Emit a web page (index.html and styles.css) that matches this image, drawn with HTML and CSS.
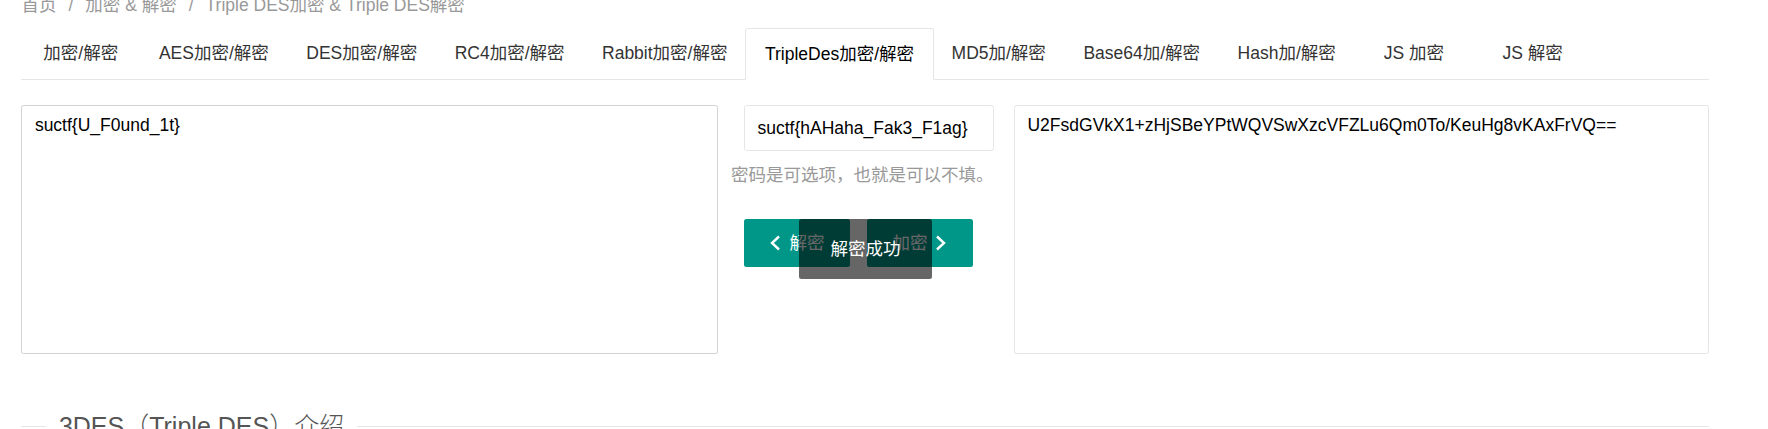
FILE: index.html
```html
<!DOCTYPE html>
<html lang="zh-CN">
<head>
<meta charset="utf-8">
<title>Triple DES加密 &amp; Triple DES解密</title>
<link rel="stylesheet" href="styles.css">
</head>
<body>
<div class="page">
  <nav class="crumbs">
    <a href="#">首页</a><span class="sep">/</span><a href="#">加密 &amp; 解密</a><span class="sep">/</span><a href="#" class="cur">Triple DES加密 &amp; Triple DES解密</a>
  </nav>

  <ul class="tabs">
    <li>加密/解密</li>
    <li>AES加密/解密</li>
    <li>DES加密/解密</li>
    <li>RC4加密/解密</li>
    <li>Rabbit加密/解密</li>
    <li class="active">TripleDes加密/解密</li>
    <li>MD5加/解密</li>
    <li>Base64加/解密</li>
    <li>Hash加/解密</li>
    <li>JS 加密</li>
    <li>JS 解密</li>
  </ul>

  <div class="work">
    <textarea class="box box-in">suctf{U_F0und_1t}</textarea>
    <div class="mid">
      <input class="pwd" type="text" value="suctf{hAHaha_Fak3_F1ag}">
      <div class="hint">密码是可选项，也就是可以不填。</div>
      <div class="btns">
        <button class="btn" type="button"><svg class="chev" viewBox="0 0 12 16" width="12" height="16"><polyline points="10,1.5 3,8 10,14.5"/></svg><span>解密</span></button>
        <button class="btn" type="button"><span>加密</span><svg class="chev" viewBox="0 0 12 16" width="12" height="16"><polyline points="2,1.5 9,8 2,14.5"/></svg></button>
      </div>
    </div>
    <textarea class="box box-out">U2FsdGVkX1+zHjSBeYPtWQVSwXzcVFZLu6Qm0To/KeuHg8vKAxFrVQ==</textarea>
  </div>

  <fieldset class="intro">
    <legend>3DES（Triple DES）介绍</legend>
  </fieldset>
</div>

<div class="toast">解密成功</div>
</body>
</html>
```

FILE: styles.css
```css
html, body {
  margin: 0;
  padding: 0;
  background: #fff;
}

body {
  font-family: "Liberation Sans", "Noto Sans CJK SC", sans-serif;
  font-size: 17.5px;
  color: #333;
  overflow: hidden;
}

.page {
  padding: 0 59px 0 21.4px;
}

/* breadcrumb */
.crumbs {
  margin-top: -6.6px;
  height: 25px;
  line-height: 25px;
  color: #999;
  white-space: nowrap;
}

.crumbs a {
  color: #999;
  text-decoration: none;
}

.crumbs .sep {
  margin: 0 12px;
  color: #999;
}

/* tabs */
.tabs {
  list-style: none;
  margin: 9.6px 0 0;
  padding: 0;
  display: flex;
  height: 51px;
  border-bottom: 1px solid #e6e6e6;
}

.tabs li {
  position: relative;
  min-width: 81.25px;
  padding: 0 18.75px;
  line-height: 51px;
  text-align: center;
  white-space: nowrap;
  color: #333;
}

.tabs li.active {
  color: #000;
  border: 1px solid #e6e6e6;
  border-bottom: 1px solid #fff;
  border-radius: 2.5px 2.5px 0 0;
  margin: 0 -1px -1px;
  line-height: 50px;
  background: #fff;
}

/* work area */
.work {
  display: grid;
  grid-template-columns: 696.6px 296px 1fr;
  margin-top: 24.5px;
}

.box {
  display: block;
  box-sizing: border-box;
  height: 249.5px;
  width: 100%;
  margin: 0;
  padding: 7.5px 12.5px;
  font-family: "Liberation Sans", "Noto Sans CJK SC", sans-serif;
  font-size: 17.5px;
  line-height: 25px;
  color: #000;
  border: 1px solid #e6e6e6;
  border-radius: 2.5px;
  resize: none;
  overflow: hidden;
  outline: none;
  background: #fff;
}

.box-in {
  border-color: #d2d2d2;
}

.mid {
  padding-left: 13px;
  display: flex;
  flex-direction: column;
  align-items: flex-start;
}

.pwd {
  box-sizing: border-box;
  margin: 0.5px 0 0 13px;
  width: 250px;
  height: 46px;
  padding: 0 12.5px;
  font-family: "Liberation Sans", "Noto Sans CJK SC", sans-serif;
  font-size: 17.5px;
  color: #000;
  border: 1px solid #e6e6e6;
  border-radius: 2.5px;
  outline: none;
  background: #fff;
}

.hint {
  margin-top: 11.5px;
  line-height: 25px;
  color: #999;
  white-space: nowrap;
}

.btns {
  display: flex;
  gap: 17px;
  margin: 31px 0 0 13px;
}

.btn {
  display: flex;
  align-items: center;
  justify-content: center;
  gap: 8px;
  box-sizing: border-box;
  width: 106px;
  height: 48px;
  padding: 0;
  border: none;
  border-radius: 2.5px;
  background: #009688;
  color: #fff;
  font-family: "Liberation Sans", "Noto Sans CJK SC", sans-serif;
  font-size: 17.5px;
  line-height: 48px;
}

.chev {
  display: block;
  fill: none;
  stroke: #fff;
  stroke-width: 2.4;
  stroke-linecap: butt;
  stroke-linejoin: miter;
}

/* intro fieldset */
.intro {
  margin: 58px 0 0;
  padding: 0;
  border: none;
  border-top: 1px solid #e6e6e6;
  min-height: 40px;
}

.intro legend {
  margin-left: 25px;
  padding: 0 12.5px;
  font-size: 25px;
  font-weight: 300;
  line-height: 28px;
  color: #555;
}

/* toast message overlay */
.toast {
  position: absolute;
  left: 799px;
  top: 219px;
  width: 133px;
  height: 60px;
  line-height: 60px;
  text-align: center;
  background: rgba(0, 0, 0, 0.6);
  color: #fff;
  font-size: 17.5px;
  border-radius: 2.5px;
}
```
